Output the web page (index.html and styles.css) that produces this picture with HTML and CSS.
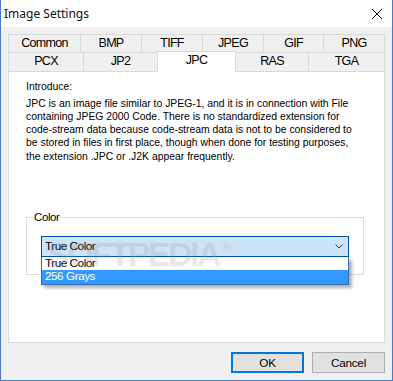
FILE: index.html
```html
<!DOCTYPE html>
<html lang="en">
<head>
    <meta charset="UTF-8">
    <title>Image Settings</title>
    <link rel="stylesheet" href="styles.css">
</head>
<body>
    <div class="window">
        <div class="titlebar">
            <span class="title">Image Settings</span>
            <svg class="close" viewBox="0 0 10 10" width="10" height="10">
                <path d="M0 0L10 10M10 0L0 10" stroke="#000" stroke-width="1"/>
            </svg>
        </div>
        <div class="content">
            <div class="tabs">
                <div class="tab-row">
                    <div class="tab w-common">Common</div>
                    <div class="tab w-bmp">BMP</div>
                    <div class="tab w-bmp">TIFF</div>
                    <div class="tab w-bmp">JPEG</div>
                    <div class="tab w-gif">GIF</div>
                    <div class="tab w-bmp">PNG</div>
                </div>
                <div class="tab-row second">
                    <div class="tab w-pcx">PCX</div>
                    <div class="tab w-jp2">JP2</div>
                    <div class="tab active">JPC</div>
                    <div class="tab w-ras">RAS</div>
                    <div class="tab w-tga">TGA</div>
                </div>
            </div>
            <div class="panel">
                <p class="intro-label">Introduce:</p>
                <p class="intro">JPC is an image file similar to JPEG-1, and it is in connection with File<br>
                containing JPEG 2000 Code. There is no standardized extension for<br>
                code-stream data because code-stream data is not to be considered to<br>
                be stored in files in first place, though when done for testing purposes,<br>
                the extension .JPC or .J2K appear frequently.</p>
                <fieldset class="group">
                    <legend>Color</legend>
                    <div class="combo">
                        <span>True Color</span>
                        <svg class="chevron" viewBox="0 0 8 5" width="8" height="5">
                            <path d="M0.5 0.5L4 4L7.5 0.5" fill="none" stroke="#333" stroke-width="1"/>
                        </svg>
                        <ul class="dropdown">
                            <li>True Color</li>
                            <li class="selected">256 Grays</li>
                        </ul>
                    </div>
                </fieldset>
                <div class="watermark">SOFTPEDIA<sup>&reg;</sup></div>
            </div>
            <div class="buttons">
                <button class="btn default">OK</button>
                <button class="btn">Cancel</button>
            </div>
        </div>
    </div>
</body>
</html>
```

FILE: styles.css
```css
body {
    margin: 0;
    font-family: 'Liberation Sans', Arial, sans-serif;
    color: #000;
}
.window {
    width: 393px;
    height: 381px;
    box-sizing: border-box;
    border: 1px solid #4b79cf;
    border-top: none;
    background: #f0f0f0;
}
.titlebar {
    height: 27px;
    background: #fff;
    display: flex;
    align-items: center;
    justify-content: space-between;
    padding: 0 10px 0 3px;
}
.title {
    font-family: 'Noto Sans', sans-serif;
    font-size: 12px;
    color: #111;
}
.close {
    display: block;
}
.content {
    padding: 7px 7px 0 7px;
}
.tab-row {
    display: flex;
    height: 19px;
}
.tab-row.second {
    margin-top: -1px;
}
.tab {
    box-sizing: border-box;
    height: 19px;
    border: 1px solid #d9d9d9;
    margin-left: -1px;
    background: #f0f0f0;
    font-size: 12.5px;
    letter-spacing: -0.7px;
    line-height: 17px;
    text-align: center;
}
.tab:first-child {
    margin-left: 0;
}
.second .tab {
    border-bottom: none;
}
.w-common { width: 73px; }
.w-bmp { width: 62px; }
.w-gif { width: 61px; }
.w-pcx { width: 76px; }
.w-jp2 { width: 75px; }
.w-ras { width: 74px; }
.w-tga { width: 77px; }
.tab.active {
    width: 79px;
    height: 21px;
    margin-top: -1px;
    background: #fff;
    position: relative;
    z-index: 1;
    line-height: 17px;
}
.panel {
    position: relative;
    box-sizing: border-box;
    height: 272px;
    background: #fff;
    border: 1px solid #d9d9d9;
    padding: 8px 0 0 17px;
}
.intro-label,
.intro {
    margin: 0;
    font-size: 10.4px;
    line-height: 13.2px;
    white-space: nowrap;
}
.intro-label {
    margin-bottom: 3.5px;
}
.group {
    width: 338px;
    box-sizing: border-box;
    margin: 48px 0 0 0;
    border: 1px solid #dcdcdc;
    padding: 0 0 17px 6px;
}
.group legend {
    font-size: 11.5px;
    letter-spacing: -0.4px;
    line-height: 13px;
    padding: 0 1px;
}
.combo {
    position: relative;
    box-sizing: border-box;
    width: 308px;
    height: 21px;
    margin: 12px 0 0 8px;
    border: 1px solid #005499;
    background: #cce4f7;
    display: flex;
    align-items: center;
    justify-content: space-between;
    padding: 0 5px 0 3px;
    font-size: 11.8px;
    letter-spacing: -0.5px;
}
.chevron {
    display: block;
}
.dropdown {
    position: absolute;
    top: calc(100% + 1px);
    left: -1px;
    width: 308px;
    box-sizing: border-box;
    margin: 0;
    padding: 0;
    list-style: none;
    background: #fff;
    border: 1px solid #2a6db0;
    border-top: none;
    box-shadow: 3px 3px 3px rgba(0, 0, 0, 0.3);
}
.dropdown li {
    height: 13.5px;
    line-height: 13.5px;
    padding-left: 3px;
}
.dropdown li.selected {
    background: #3399ff;
    color: #fff;
}
.watermark {
    position: absolute;
    left: 38px;
    top: 159px;
    z-index: 2;
    font-weight: bold;
    font-size: 34px;
    line-height: 34px;
    letter-spacing: -2.5px;
    color: rgba(150, 150, 150, 0.22);
}
.watermark sup {
    font-size: 13px;
    letter-spacing: 0;
    margin-left: 3px;
    vertical-align: 14px;
}
.buttons {
    display: flex;
    justify-content: flex-end;
    gap: 8px;
    margin-top: 9px;
}
.btn {
    box-sizing: border-box;
    width: 73px;
    height: 21px;
    background: #e1e1e1;
    border: 1px solid #adadad;
    border-radius: 0;
    padding: 0;
    font-family: 'Liberation Sans', sans-serif;
    font-size: 11.8px;
    letter-spacing: -0.3px;
    color: #000;
}
.btn.default {
    border-color: #0078d7;
    box-shadow: inset 0 0 0 1px #0078d7;
}
```
